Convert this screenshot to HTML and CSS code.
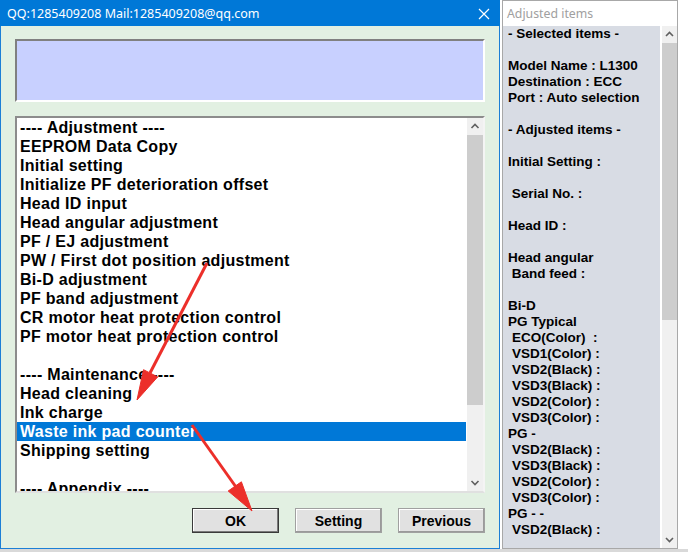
FILE: index.html
```html
<!DOCTYPE html>
<html lang="en">
<head>
    <meta charset="UTF-8">
    <title>Adjustment Program</title>
    <link rel="stylesheet" href="styles.css">
</head>
<body>
    <div class="screen">
        <div class="dialog">
            <div class="titlebar">
                <span class="title">QQ:1285409208 Mail:1285409208@qq.com</span>
                <svg class="close" width="12" height="12" viewBox="0 0 12 12">
                    <path d="M1 1 L11 11 M11 1 L1 11" stroke="#fff" stroke-width="1.2" fill="none"/>
                </svg>
            </div>
            <div class="dialogBody">
                <div class="infoBox"></div>
                <div class="listBox">
                    <ul class="items">
                        <li>---- Adjustment ----</li>
                        <li>EEPROM Data Copy</li>
                        <li>Initial setting</li>
                        <li>Initialize PF deterioration offset</li>
                        <li>Head ID input</li>
                        <li>Head angular adjustment</li>
                        <li>PF / EJ adjustment</li>
                        <li>PW / First dot position adjustment</li>
                        <li>Bi-D adjustment</li>
                        <li>PF band adjustment</li>
                        <li>CR motor heat protection control</li>
                        <li>PF motor heat protection control</li>
                        <li>&nbsp;</li>
                        <li>---- Maintenance ----</li>
                        <li>Head cleaning</li>
                        <li>Ink charge</li>
                        <li class="selected">Waste ink pad counter</li>
                        <li>Shipping setting</li>
                        <li>&nbsp;</li>
                        <li>---- Appendix ----</li>
                    </ul>
                    <div class="scrollbar">
                        <svg class="arrowBtn" width="16" height="17" viewBox="0 0 16 17">
                            <path d="M4.5 10 L8 6.5 L11.5 10" stroke="#606060" stroke-width="1.6" fill="none"/>
                        </svg>
                        <div class="track">
                            <div class="thumb listThumb"></div>
                        </div>
                        <svg class="arrowBtn" width="16" height="17" viewBox="0 0 16 17">
                            <path d="M4.5 7 L8 10.5 L11.5 7" stroke="#606060" stroke-width="1.6" fill="none"/>
                        </svg>
                    </div>
                </div>
                <div class="buttons">
                    <button class="btn default">OK</button>
                    <button class="btn">Setting</button>
                    <button class="btn">Previous</button>
                </div>
            </div>
        </div>

        <div class="panel">
            <div class="panelTitle">Adjusted items</div>
            <div class="panelBody">
                <div class="report">
                    <div>- Selected items -</div>
                    <div>&nbsp;</div>
                    <div>Model Name : L1300</div>
                    <div>Destination : ECC</div>
                    <div>Port : Auto selection</div>
                    <div>&nbsp;</div>
                    <div>- Adjusted items -</div>
                    <div>&nbsp;</div>
                    <div>Initial Setting :</div>
                    <div>&nbsp;</div>
                    <div>&nbsp;Serial No. :</div>
                    <div>&nbsp;</div>
                    <div>Head ID :</div>
                    <div>&nbsp;</div>
                    <div>Head angular</div>
                    <div>&nbsp;Band feed :</div>
                    <div>&nbsp;</div>
                    <div>Bi-D</div>
                    <div>PG Typical</div>
                    <div class="sub">ECO(Color)&nbsp; :</div>
                    <div class="sub">VSD1(Color) :</div>
                    <div class="sub">VSD2(Black) :</div>
                    <div class="sub">VSD3(Black) :</div>
                    <div class="sub">VSD2(Color) :</div>
                    <div class="sub">VSD3(Color) :</div>
                    <div>PG -</div>
                    <div class="sub">VSD2(Black) :</div>
                    <div class="sub">VSD3(Black) :</div>
                    <div class="sub">VSD2(Color) :</div>
                    <div class="sub">VSD3(Color) :</div>
                    <div>PG - -</div>
                    <div class="sub">VSD2(Black) :</div>
                </div>
                <div class="scrollbar">
                    <svg class="arrowBtn" width="15" height="17" viewBox="0 0 15 17">
                        <path d="M4 10 L7.5 6.5 L11 10" stroke="#606060" stroke-width="1.6" fill="none"/>
                    </svg>
                    <div class="track">
                        <div class="thumb panelThumb"></div>
                    </div>
                    <svg class="arrowBtn" width="15" height="17" viewBox="0 0 15 17">
                        <path d="M4 7 L7.5 10.5 L11 7" stroke="#606060" stroke-width="1.6" fill="none"/>
                    </svg>
                </div>
            </div>
        </div>
    </div>

    <!-- 赤い矢印 (annotation) -->
    <svg class="marks" width="688" height="552" viewBox="0 0 688 552">
        <g fill="#ec2f2a" stroke="#ec2f2a">
            <line x1="207" y1="263" x2="150" y2="373" stroke-width="3"/>
            <polygon points="137,400 157.7,376.9 143.5,369.7" stroke-width="1"/>
            <line x1="192" y1="425" x2="236" y2="487" stroke-width="3"/>
            <polygon points="252,511 228.2,491 241.4,481.8" stroke-width="1"/>
        </g>
    </svg>
</body>
</html>
```

FILE: styles.css
```css
body {
    margin: 0;
    padding: 0;
    width: 688px;
    height: 552px;
    background-color: #d9d9d9;
    font-family: "Liberation Sans", Arial, sans-serif;
    position: relative;
    overflow: hidden;
}

.screen {
    display: flex;
    gap: 2px;
    height: 549px;
    background-color: #fff;
}

.dialog {
    width: 500px;
    height: 549px;
    box-sizing: border-box;
    border: 1px solid #1c7fd6;
    border-top: none;
    background-color: #e2f0e2;
    display: flex;
    flex-direction: column;
}

.titlebar {
    height: 26px;
    margin: 0 -1px;
    background-color: #0078d7;
    color: #fff;
    display: flex;
    align-items: center;
    justify-content: space-between;
    padding: 0 10px 0 7px;
    font-family: "Noto Sans", "Open Sans", sans-serif;
    font-size: 12.5px;
}

.close {
    margin-top: 1px;
}

.dialogBody {
    padding: 13px 14px 0 14px;
    display: flex;
    flex-direction: column;
}

.infoBox {
    height: 59px;
    background-color: #c8d0ff;
    border-top: 2px solid #808080;
    border-left: 2px solid #808080;
    border-right: 2px solid #ffffff;
    border-bottom: 2px solid #ffffff;
}

.listBox {
    margin-top: 14px;
    height: 373px;
    display: flex;
    background-color: #fff;
    border-top: 2px solid #8c8c8c;
    border-left: 2px solid #8c8c8c;
    border-right: 2px solid #f4f4f4;
    border-bottom: 2px solid #e0e0e0;
    overflow: hidden;
}

.items {
    list-style: none;
    margin: 0;
    padding: 0;
    flex: 1;
    font-size: 16px;
    font-weight: bold;
    letter-spacing: 0.3px;
    color: #000;
}

.items li {
    height: 19px;
    line-height: 19px;
    padding-left: 3px;
    white-space: nowrap;
}

.items li.selected {
    background-color: #0078d7;
    color: #fff;
}

.scrollbar {
    width: 16px;
    display: flex;
    flex-direction: column;
    background-color: #f0f0f0;
    border-left: 1px solid #fff;
}

.arrowBtn {
    display: block;
    flex: none;
}

.track {
    flex: 1;
}

.thumb {
    background-color: #cdcdcd;
}

.listThumb {
    height: 270px;
}

.panelThumb {
    height: 277px;
}

.buttons {
    display: flex;
    justify-content: flex-end;
    gap: 16px;
    margin-top: 15px;
}

.btn {
    width: 87px;
    height: 25px;
    padding: 0;
    font-family: "Liberation Sans", Arial, sans-serif;
    font-size: 14px;
    font-weight: bold;
    color: #000;
    background-color: #e1e1e1;
    border: 1px solid #a0a0a0;
    box-shadow: inset -1px -1px 0 #9a9a9a, inset 1px 1px 0 #ffffff;
}

.btn.default {
    border: 1px solid #3a3a3a;
    box-shadow: inset -1px -1px 0 #7a7a7a, inset 1px 1px 0 #ffffff;
}

.panel {
    width: 176px;
    height: 549px;
    box-sizing: border-box;
    border: 1px solid #a8a8a8;
    display: flex;
    flex-direction: column;
}

.panelTitle {
    height: 25px;
    line-height: 25px;
    background-color: #fff;
    color: #a0a0a0;
    font-family: "Noto Sans", "Open Sans", sans-serif;
    font-size: 12.3px;
    padding-left: 4px;
}

.panelBody {
    flex: 1;
    display: flex;
    background-color: #d8dce4;
    overflow: hidden;
}

.report {
    flex: 1;
    padding-left: 5px;
    font-size: 13.5px;
    font-weight: bold;
    line-height: 16px;
    color: #000;
    white-space: nowrap;
}

.report .sub {
    padding-left: 4px;
}

.panelBody .scrollbar {
    border-left: 2px solid #fff;
    width: 15px;
}

.marks {
    position: absolute;
    top: 0;
    left: 0;
    pointer-events: none;
}
```
